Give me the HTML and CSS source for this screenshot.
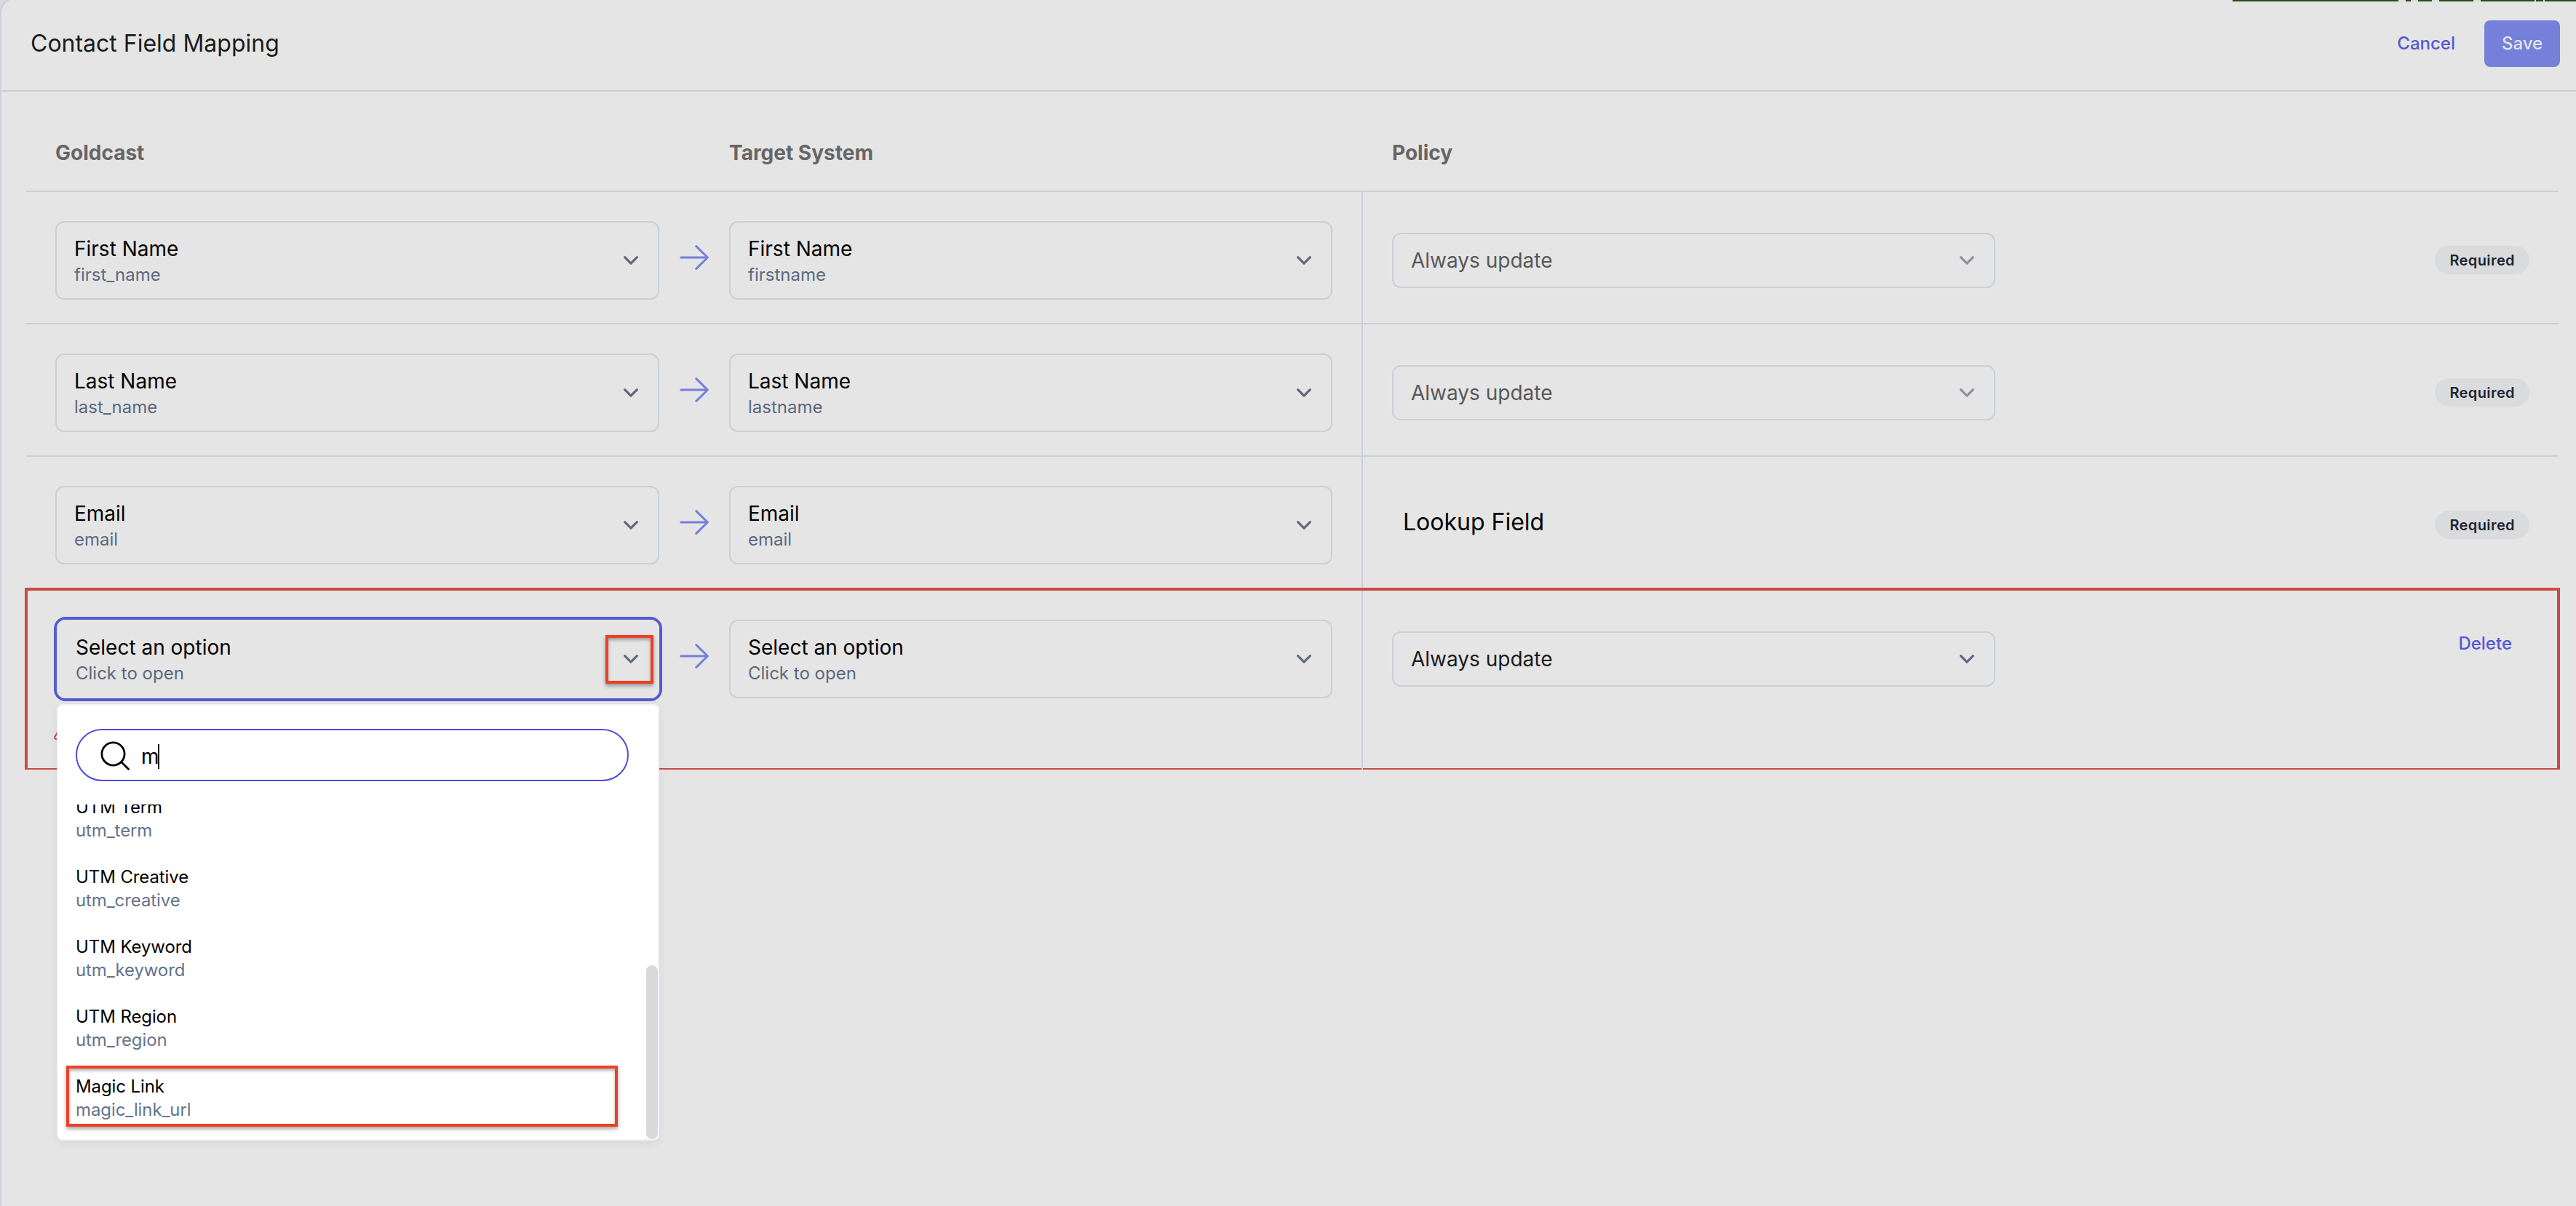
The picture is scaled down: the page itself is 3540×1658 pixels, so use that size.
FILE: index.html
```html
<!DOCTYPE html>
<html lang="en">
<head>
<meta charset="utf-8">
<title>Contact Field Mapping</title>
<link rel="stylesheet" href="styles.css">
</head>
<body>
<svg class="sprite" aria-hidden="true">
  <symbol id="chevron" viewBox="0 0 40 40"><path d="M11.6 15.6 20 24.2 28.4 15.6" /></symbol>
  <symbol id="arrow" viewBox="0 0 40 34"><path d="M1.8 17H38.2M22.8 1.6 38.4 17 22.8 32.4" /></symbol>
</svg>
<div class="strip"></div>
<main class="sheet">
  <header class="topbar">
    <h1 class="title">Contact Field Mapping</h1>
    <div class="actions">
      <button class="btn btn-text">Cancel</button>
      <button class="btn btn-primary">Save</button>
    </div>
  </header>

  <section class="table">
    <div class="head">
      <div>Goldcast</div>
      <div class="head-target">Target System</div>
      <div class="head-policy">Policy</div>
    </div>

    <div class="row">
      <div class="field"><div class="texts"><div class="name">First Name</div><div class="sub">first_name</div></div><svg class="chevron"><use href="#chevron"/></svg></div>
      <svg class="arrow"><use href="#arrow"/></svg>
      <div class="field"><div class="texts"><div class="name">First Name</div><div class="sub">firstname</div></div><svg class="chevron"><use href="#chevron"/></svg></div>
      <div class="policy">
        <div class="select muted"><span>Always update</span><svg class="chevron"><use href="#chevron"/></svg></div>
        <span class="pill">Required</span>
      </div>
    </div>

    <div class="row">
      <div class="field"><div class="texts"><div class="name">Last Name</div><div class="sub">last_name</div></div><svg class="chevron"><use href="#chevron"/></svg></div>
      <svg class="arrow"><use href="#arrow"/></svg>
      <div class="field"><div class="texts"><div class="name">Last Name</div><div class="sub">lastname</div></div><svg class="chevron"><use href="#chevron"/></svg></div>
      <div class="policy">
        <div class="select muted"><span>Always update</span><svg class="chevron"><use href="#chevron"/></svg></div>
        <span class="pill">Required</span>
      </div>
    </div>

    <div class="row row-plain">
      <div class="field"><div class="texts"><div class="name">Email</div><div class="sub">email</div></div><svg class="chevron"><use href="#chevron"/></svg></div>
      <svg class="arrow"><use href="#arrow"/></svg>
      <div class="field"><div class="texts"><div class="name">Email</div><div class="sub">email</div></div><svg class="chevron"><use href="#chevron"/></svg></div>
      <div class="policy">
        <span class="lookup">Lookup Field</span>
        <span class="pill">Required</span>
      </div>
    </div>

    <div class="row row-error">
      <div class="cell">
        <div class="field field-open"><div class="texts"><div class="name">Select an option</div><div class="sub">Click to open</div></div><svg class="chevron"><use href="#chevron"/></svg>
          <div class="callout callout-chevron"></div>
        </div>
        <svg class="warning" viewBox="0 0 24 25"><path d="M11 2.5Q12 1 13 2.5L22.5 20.5Q23 23 20.5 23.2H3.5Q.8 23 1.3 20.2Z" /></svg>
        <div class="menu">
          <div class="search">
            <svg class="search-icon" viewBox="0 0 42 42"><circle cx="18.5" cy="18.5" r="15.6"/><path d="M29.6 29.6 39.6 39.6"/></svg>
            <span class="query">m</span><span class="caret"></span>
          </div>
          <div class="list">
            <div class="item"><div>UTM Term</div><div class="item-sub">utm_term</div></div>
            <div class="item"><div>UTM Creative</div><div class="item-sub">utm_creative</div></div>
            <div class="item"><div>UTM Keyword</div><div class="item-sub">utm_keyword</div></div>
            <div class="item"><div>UTM Region</div><div class="item-sub">utm_region</div></div>
            <div class="item"><div>Magic Link</div><div class="item-sub">magic_link_url</div></div>
          </div>
          <div class="thumb"></div>
          <div class="callout callout-item"></div>
        </div>
      </div>
      <svg class="arrow"><use href="#arrow"/></svg>
      <div class="field"><div class="texts"><div class="name">Select an option</div><div class="sub">Click to open</div></div><svg class="chevron"><use href="#chevron"/></svg></div>
      <div class="policy">
        <div class="select"><span>Always update</span><svg class="chevron"><use href="#chevron"/></svg></div>
        <button class="btn btn-text btn-delete">Delete</button>
      </div>
    </div>
  </section>
</main>
</body>
</html>
```
FILE: styles.css
```css
* { box-sizing: border-box; }

body {
  margin: 0;
  height: 1658px;
  overflow: hidden;
  background: #d8dadb;
  font-family: Inter, "Liberation Sans", sans-serif;
  font-size: 28px;
  color: #000;
}

.sprite { display: none; }

.strip {
  position: absolute;
  top: 0;
  right: 0;
  width: 472px;
  height: 2px;
  background: linear-gradient(90deg,
    #264f16 228px, #dcdfda 228px 238px, #264f16 238px 245px, #dcdfda 245px 255px,
    #264f16 255px 274px, #dcdfda 274px 284px, #264f16 284px 331px, #dcdfda 331px 341px,
    #264f16 341px 415px, #dcdfda 415px 417px, #264f16 417px 427px, #dcdfda 427px 429px, #264f16 429px);
}

.sheet {
  height: 1662px;
  margin-top: -4px;
  padding-top: 2px;
  border: solid #cbd0da;
  border-width: 2px 0 0 2px;
  border-top-left-radius: 22px;
  background: #e5e5e5;
}

.topbar {
  display: flex;
  align-items: center;
  justify-content: space-between;
  height: 126px;
  padding: 28px 22px 32px 40px;
  border-bottom: 2px solid #cad0d6;
}

.title {
  margin: 0;
  font-size: 32px;
  font-weight: 400;
  line-height: 40px;
  color: #1b1b1b;
}

.actions { display: flex; gap: 16px; }

.btn {
  height: 64px;
  padding: 0 24px;
  border: 0;
  border-radius: 8px;
  background: none;
  font: 500 24px/64px Inter, "Liberation Sans", sans-serif;
}

.btn-text { color: #5459d2; }
.btn-primary { width: 104px; background: #7480da; color: #e5e5e5; }
.btn-delete { margin-top: 1px; }

.table { padding: 0 24px 0 34px; }

.head {
  display: grid;
  grid-template-columns: 926px 911px 1fr;
  height: 138px;
  padding: 64px 40px 0;
  border-bottom: 2px solid #cad0d6;
  font-weight: 700;
  line-height: 40px;
  color: #666;
}

.row {
  display: grid;
  grid-template-columns: 830px 96px 829px 40px 1fr;
  grid-template-rows: 100%;
  height: 182px;
  padding-left: 40px;
  border-bottom: 2px solid #cad0d6;
}

.row > .field,
.row > .cell { margin-top: 40px; }

.row-plain { height: 180px; border-bottom: 0; }

.row-error {
  grid-template-columns: 828px 96px 829px 40px 1fr;
  height: 250px;
  margin: 0 -2px;
  border: solid #c94b45;
  border-width: 4px 4px 2px;
}

.field,
.select {
  display: flex;
  align-items: center;
  justify-content: space-between;
  padding: 0 17px 0 24px;
  border: 2px solid #cad0d6;
  border-radius: 12px;
}

.field { height: 108px; }

.field-open {
  position: relative;
  border-color: #e5e5e5;
  box-shadow: 0 0 0 4px #555bd2;
}

.texts { padding-top: 2px; }
.name { line-height: 36px; }
.sub { padding-top: 1px; margin-bottom: -1px; font-size: 24px; line-height: 34px; color: #5b697e; }

.chevron {
  flex: none;
  width: 40px;
  height: 40px;
  fill: none;
  stroke: #61687a;
  stroke-width: 3.2;
  stroke-linecap: round;
  stroke-linejoin: round;
}

.arrow {
  justify-self: center;
  width: 40px;
  height: 34px;
  margin-top: 73px;
  fill: none;
  stroke: #7480dc;
  stroke-width: 3;
  stroke-linecap: round;
  stroke-linejoin: round;
}

.policy {
  grid-column: 5;
  display: flex;
  justify-content: space-between;
  align-items: flex-start;
  padding: 40px 40px 0;
  border-left: 2px solid #cbcfd6;
}

.row-error .policy { margin-bottom: -2px; padding-right: 38px; }

.select { width: 829px; height: 76px; margin-top: 16px; color: #1b1b1b; }
.muted { color: #585858; }
.muted .chevron { stroke: #8d90a0; }

.lookup { margin: 30px 0 0 15px; font-size: 32px; line-height: 40px; }

.pill {
  height: 39px;
  margin-top: 34px;
  padding: 0 20px;
  border-radius: 20px;
  background: #dadbdd;
  font-size: 20px;
  font-weight: 600;
  line-height: 40px;
  letter-spacing: 0.4px;
  color: #1c2431;
}

.cell { position: relative; }

.warning {
  display: block;
  width: 24px;
  height: 25px;
  margin: 33px 0 0 -4px;
  fill: none;
  stroke: #c94b45;
  stroke-width: 2;
}

.menu {
  position: absolute;
  top: 116px;
  left: 0;
  width: 828px;
  height: 600px;
  padding: 32px 24px 0;
  border: 2px solid #f1f5fa;
  border-radius: 8px;
  background: #fff;
  box-shadow: 0 4px 14px rgba(0, 0, 0, 0.06);
}

.search {
  display: flex;
  align-items: center;
  width: 760px;
  height: 72px;
  padding-left: 31px;
  border: 2px solid #4c4ed8;
  border-radius: 36px;
}

.search-icon {
  width: 42px;
  height: 42px;
  margin-top: 2px;
  fill: none;
  stroke: #000;
  stroke-width: 2.8;
  stroke-linecap: round;
}

.query { margin-left: 15px; line-height: 40px; padding-top: 3px; }
.caret { width: 2px; height: 34px; margin-top: 4px; margin-left: -2px; background: #000; }

.list {
  height: 460px;
  margin-top: 32px;
  overflow: hidden;
  font-size: 24px;
  line-height: 32px;
  letter-spacing: -0.1px;
}

.item { margin-bottom: 32px; }
.item:first-child { margin-top: -12px; }
.item-sub { color: #64748b; }

.thumb {
  position: absolute;
  right: 0;
  bottom: 0;
  width: 16px;
  height: 239px;
  border-radius: 8px;
  background: #d9d9d9;
}

.callout {
  position: absolute;
  border: 4px solid #ee4025;
  box-shadow: 0 3px 5px rgba(0, 0, 0, 0.35), inset 0 3px 4px rgba(0, 0, 0, 0.3);
}

.callout-chevron { left: 752px; top: 19px; width: 66px; height: 67px; }
.callout-item { left: 11px; top: 495px; width: 758px; height: 84px; }
```
